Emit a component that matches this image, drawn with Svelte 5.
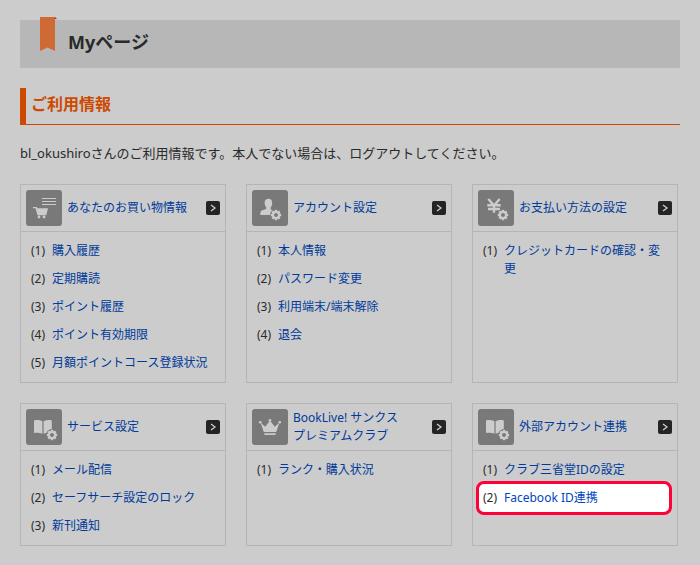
<script>
  const groups = [
    {
      title: ['あなたのお買い物情報'],
      icon: 'cart',
      items: ['購入履歴', '定期購読', 'ポイント履歴', 'ポイント有効期限', '月額ポイントコース登録状況'],
    },
    {
      title: ['アカウント設定'],
      icon: 'user',
      items: ['本人情報', 'パスワード変更', '利用端末/端末解除', '退会'],
    },
    {
      title: ['お支払い方法の設定'],
      icon: 'yen',
      items: ['クレジットカードの確認・変更'],
    },
    {
      title: ['サービス設定'],
      icon: 'book',
      items: ['メール配信', 'セーフサーチ設定のロック', '新刊通知'],
    },
    {
      title: ['BookLive! サンクス', 'プレミアムクラブ'],
      icon: 'crown',
      items: ['ランク・購入状況'],
    },
    {
      title: ['外部アカウント連携'],
      icon: 'book',
      items: ['クラブ三省堂IDの設定', 'Facebook ID連携'],
      active: 1,
    },
  ];

  const teeth = [0, 45, 90, 135, 180, 225, 270, 315];
</script>

{#snippet gear(x, y)}
  <g transform="translate({x} {y})">
    <circle r="6" class="gap" />
    {#each teeth as angle}
      <rect x="-1.2" y="-5.2" width="2.4" height="3" transform="rotate({angle})" />
    {/each}
    <circle r="3" class="ring" />
  </g>
{/snippet}

<main>
  <header class="banner">
    <svg class="ribbon" viewBox="0 0 18 34" aria-hidden="true">
      <path d="M15 0l2 2h-2z" fill="#983a10" />
      <path d="M0 0h15v34l-7.500-3.500L0 34z" fill="#cf6a35" />
    </svg>
    <h1>Myページ</h1>
  </header>

  <h2>ご利用情報</h2>
  <p class="lead">bl_okushiroさんのご利用情報です。本人でない場合は、ログアウトしてください。</p>

  <div class="groups">
    {#each groups as group}
      <section class="group">
        <a class="group-head" href="#top">
          <svg class="icon" viewBox="0 0 36 36" aria-hidden="true">
            {#if group.icon === 'cart'}
              <path class="line" d="M16 8.500h14M16 11.500h14M16 14.500h14" />
              <path d="M7 17h3.800l.6 1.200H22l-1.700 7h-8.800l-2-6.900H7z" />
              <circle cx="13" cy="27" r="1.400" />
              <circle cx="18" cy="27" r="1.400" />
            {:else if group.icon === 'user'}
              <path d="M16.500 8.700c2.600 0 3.700 1.700 3.700 4.300 0 1.900-.6 3.400-1.500 4.500v1.900l4 1.600v4H8.300c0-3 .3-4 2-4.700l3.900-1.400v-1.800c-1-1-1.600-2.400-1.600-4.200 0-2.500 1.300-4.200 3.900-4.200z" />
              {@render gear(24, 25)}
            {:else if group.icon === 'yen'}
              <path class="yen" d="M10.300 9l5.700 6.500L21.700 9M16 15v7.700M9.300 15.200h13.400M10 19h12" />
              {@render gear(25, 25)}
            {:else if group.icon === 'book'}
              <path d="M8 11.500c3-.8 6-.5 8.400.7v12.600c-2.500-1.200-5.400-1.500-8.400-.7zM17.600 12.200c2.500-1.200 5.400-1.500 8.200-.7v12.600c-2.800-.8-5.700-.5-8.200.7z" />
              {@render gear(26, 26)}
            {:else}
              <path d="M8.500 13.500l4.700 4.300 4.800-6.300 4.800 6.300 4.700-4.300-3.300 9.500H11.800zM12 24.300h12l-.7 1.700H12.700z" />
              <circle cx="8.200" cy="13.200" r="1.300" />
              <circle cx="18" cy="11.200" r="1.300" />
              <circle cx="27.800" cy="13.200" r="1.300" />
            {/if}
          </svg>
          <span class="title">
            {#each group.title as line}
              <span>{line}</span>
            {/each}
          </span>
          <svg class="arrow" viewBox="0 0 14 14" aria-hidden="true">
            <path d="M5 4l4 3-4 3" />
          </svg>
        </a>
        <ol>
          {#each group.items as item, i}
            <li class:active={group.active === i}>
              <span class="num">({i + 1})</span>
              <a href="#top">{item}</a>
            </li>
          {/each}
        </ol>
      </section>
    {/each}
  </div>
</main>

<style>
  :global(body) {
    background: #ccc;
    color: #2a2a2a;
    font-family: 'Noto Sans', 'Noto Sans CJK JP', sans-serif;
    font-size: 12px;
    line-height: 18px;
  }

  main {
    padding: 20px 20px 18px;
  }

  a {
    color: #003a9a;
    text-decoration: none;
  }

  a:hover {
    text-decoration: underline;
  }

  /* page title */
  .banner {
    position: relative;
    padding: 10px 48px 14px;
    background: #b7b7b7;
  }

  .ribbon {
    position: absolute;
    top: -3px;
    left: 20px;
    width: 18px;
    height: 34px;
  }

  h1 {
    margin: 0;
    font-size: 18px;
    line-height: 24px;
  }

  h2 {
    margin: 20px 0 0;
    padding: 4px 5px 8px;
    border-left: 6px solid #cc4a00;
    border-bottom: 1px solid #cc4a00;
    color: #cc4a00;
    font-size: 16px;
    line-height: 24px;
  }

  .lead {
    margin: 18px 0 20px;
    font-size: 13px;
    line-height: 21px;
  }

  /* menu boxes */
  .groups {
    display: grid;
    grid-template-columns: repeat(3, 1fr);
    gap: 20px;
    margin-right: 2px;
  }

  .group {
    min-width: 0;
    border: 1px solid #b5b5b5;
  }

  .group-head {
    display: flex;
    align-items: center;
    gap: 5px;
    padding: 5px;
    border-bottom: 1px solid #b5b5b5;
  }

  .title {
    flex: 1;
  }

  .title span {
    display: block;
  }

  .icon {
    flex-shrink: 0;
    width: 36px;
    height: 36px;
    border-radius: 3px;
    background: #797979;
    fill: #ccc;
  }

  .line {
    stroke: #ccc;
  }

  .yen {
    fill: none;
    stroke: #ccc;
    stroke-width: 2.4;
  }

  .gap {
    fill: #797979;
  }

  .ring {
    fill: none;
    stroke: #ccc;
    stroke-width: 2;
  }

  .arrow {
    flex-shrink: 0;
    width: 14px;
    height: 14px;
    border-radius: 2px;
    background: #242424;
    fill: none;
    stroke: #ccc;
    stroke-width: 1.3;
  }

  ol {
    display: flex;
    flex-direction: column;
    gap: 10px;
    margin: 0;
    padding: 10px 12px 10px 10px;
    list-style: none;
  }

  li {
    display: flex;
  }

  .num {
    flex: 0 0 21px;
  }

  .active {
    margin: -8px -7px;
    padding: 5px 4px;
    border: 3px solid #ff0038;
    border-radius: 8px;
    background: #fff;
  }

  .active a {
    color: #0046c0;
  }
</style>
